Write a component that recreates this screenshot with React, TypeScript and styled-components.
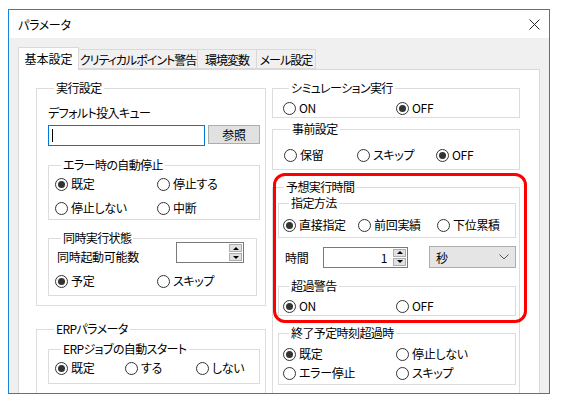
import React from "react";
import styled, { createGlobalStyle } from "styled-components";

const GlobalStyle = createGlobalStyle`
  html, body {
    margin: 0;
    padding: 0;
    background: #ffffff;
  }
  body {
    font-family: "Noto Sans CJK JP", "Noto Sans", sans-serif;
    font-size: 12px;
    font-feature-settings: "palt";
    letter-spacing: -0.3px;
    color: #000;
  }
`;

const Window = styled.div`
  margin: 9px 0 0 8px;
  width: 542px;
  height: 385px;
  box-sizing: border-box;
  border: 1px solid #1883d7;
  display: flex;
  flex-direction: column;
  overflow: hidden;
`;

const TitleBar = styled.div`
  height: 28px;
  flex: none;
  background: #fff;
  display: flex;
  align-items: center;
  justify-content: space-between;
  padding: 0 9px 0 9px;
  font-size: 12px;
`;

const CloseIcon = () => (
  <svg width="11" height="11" viewBox="0 0 11 11">
    <path d="M0.5 0.5 L10.5 10.5 M10.5 0.5 L0.5 10.5" stroke="#222" strokeWidth="1" />
  </svg>
);

const Body = styled.div`
  flex: 1;
  background: #f0f0f0;
  padding: 9px 9px 0 9px;
  display: flex;
  flex-direction: column;
  min-height: 0;
`;

const TabStrip = styled.div`
  display: flex;
  align-items: flex-end;
  height: 22px;
  flex: none;
  position: relative;
  z-index: 1;
`;

const Tab = styled.div<{ $active?: boolean; $w: number }>`
  box-sizing: border-box;
  width: ${(p) => p.$w}px;
  height: ${(p) => (p.$active ? "23px" : "20px")};
  margin-bottom: ${(p) => (p.$active ? "-1px" : "0")};
  padding-bottom: ${(p) => (p.$active ? "1px" : "0")};
  background: ${(p) => (p.$active ? "#fff" : "#f0f0f0")};
  border: 1px solid #d9d9d9;
  border-bottom: ${(p) => (p.$active ? "none" : "1px solid #d9d9d9")};
  border-left: ${(p) => (p.$active ? "1px solid #d9d9d9" : "none")};
  display: flex;
  align-items: center;
  justify-content: center;
  white-space: nowrap;
  letter-spacing: ${(p) => (p.$active ? "0" : "-1px")};
`;

const Panel = styled.div`
  position: relative;
  flex: 1;
  background: #fff;
  border: 1px solid #d9d9d9;
  border-bottom: none;
  padding: 12px 0 0 17px;
  display: grid;
  grid-template-columns: 230px 248px;
  column-gap: 6px;
  align-items: start;
`;

const Column = styled.div`
  display: flex;
  flex-direction: column;
`;

const Group = styled.fieldset<{ $pad: string; $mt?: number; $mr?: number }>`
  margin: ${(p) => `${p.$mt ?? 0}px ${p.$mr ?? 0}px 0 0`};
  padding: ${(p) => p.$pad};
  border: 1px solid #dcdcdc;
  min-width: 0;
  box-sizing: border-box;
`;

const Legend = styled.legend`
  padding: 0 2px;
  margin-left: 6px;
  line-height: 12px;
  font-size: 12px;
  letter-spacing: -0.6px;
`;

const Caption = styled.div`
  line-height: 16px;
  letter-spacing: -0.6px;
`;

const RadioGrid = styled.div<{ $cols: string; $gap?: number; $mt?: number }>`
  display: grid;
  grid-template-columns: ${(p) => p.$cols};
  row-gap: ${(p) => p.$gap ?? 0}px;
  margin-top: ${(p) => p.$mt ?? 0}px;
`;

const RadioItem = styled.label`
  display: flex;
  align-items: center;
  height: 16px;
  line-height: 16px;
  white-space: nowrap;
`;

const RadioCircle = styled.span<{ $checked?: boolean }>`
  width: 13px;
  height: 13px;
  box-sizing: border-box;
  border: 1px solid #333;
  border-radius: 50%;
  background: #fff;
  margin-right: 3px;
  display: flex;
  align-items: center;
  justify-content: center;
  flex: none;
  &::after {
    content: "";
    display: ${(p) => (p.$checked ? "block" : "none")};
    width: 7px;
    height: 7px;
    border-radius: 50%;
    background: #333;
  }
`;

const Radio = ({ label, checked }: { label: string; checked?: boolean }) => (
  <RadioItem>
    <RadioCircle $checked={checked} />
    {label}
  </RadioItem>
);

const InputRow = styled.div`
  display: flex;
  align-items: flex-start;
  gap: 3px;
  margin-top: 4px;
`;

const TextBox = styled.div`
  width: 157px;
  height: 21px;
  box-sizing: border-box;
  border: 1px solid #0078d7;
  background: #fff;
  display: flex;
  align-items: center;
  padding-left: 3px;
`;

const Caret = styled.span`
  width: 1px;
  height: 13px;
  background: #000;
`;

const Button = styled.div`
  width: 52px;
  height: 19px;
  box-sizing: border-box;
  border: 1px solid #adadad;
  background: #e1e1e1;
  display: flex;
  align-items: center;
  justify-content: center;
`;

const SpinRow = styled.div`
  display: flex;
  align-items: flex-end;
  margin-top: -2px;
  padding-right: 12px;
`;

const SpinLabel = styled.span`
  line-height: 16px;
  padding-left: 2px;
  margin-bottom: -2px;
`;

const SpinBox = styled.div<{ $w: number; $mlAuto?: boolean }>`
  width: ${(p) => p.$w}px;
  height: 21px;
  box-sizing: border-box;
  border: 1px solid #7a7a7a;
  background: #fff;
  display: flex;
  margin-left: ${(p) => (p.$mlAuto ? "auto" : "0")};
`;

const SpinValue = styled.div`
  flex: 1;
  text-align: right;
  padding-right: 4px;
  line-height: 19px;
`;

const SpinButtons = styled.div`
  width: 16px;
  display: flex;
  flex-direction: column;
  gap: 1px;
  padding: 1px;
  box-sizing: border-box;
  border-left: 1px solid #fff;
`;

const SpinButton = styled.div<{ $down?: boolean }>`
  flex: 1;
  background: #e1e1e1;
  border: 1px solid #adadad;
  display: flex;
  align-items: center;
  justify-content: center;
  &::after {
    content: "";
    width: 0;
    height: 0;
    border-left: 3px solid transparent;
    border-right: 3px solid transparent;
    ${(p) => (p.$down ? "border-top: 3px solid #000;" : "border-bottom: 3px solid #000;")}
  }
`;

const Spinner = ({ w, value, mlAuto }: { w: number; value?: string; mlAuto?: boolean }) => (
  <SpinBox $w={w} $mlAuto={mlAuto}>
    <SpinValue>{value}</SpinValue>
    <SpinButtons>
      <SpinButton />
      <SpinButton $down />
    </SpinButtons>
  </SpinBox>
);

const TimeRow = styled.div`
  display: flex;
  align-items: center;
  margin-top: 8px;
  padding-left: 7px;
`;

const TimeLabel = styled.span`
  width: 38px;
`;

const Combo = styled.div`
  margin-left: auto;
  width: 87px;
  height: 22px;
  box-sizing: border-box;
  border: 1px solid #adadad;
  background: #e5e5e5;
  display: flex;
  align-items: center;
  justify-content: space-between;
  padding: 0 6px 0 6px;
`;

const Chevron = () => (
  <svg width="10" height="6" viewBox="0 0 10 6">
    <polyline points="0.5,0.5 5,5 9.5,0.5" fill="none" stroke="#555" strokeWidth="1" />
  </svg>
);

const Highlight = styled.div`
  position: absolute;
  left: 254px;
  top: 103px;
  width: 254px;
  height: 150px;
  box-sizing: border-box;
  border: 3px solid #ff0000;
  border-radius: 12px;
  pointer-events: none;
`;

export default function App() {
  return (
    <>
      <GlobalStyle />
      <Window>
        <TitleBar>
          <span>パラメータ</span>
          <CloseIcon />
        </TitleBar>
        <Body>
          <TabStrip>
            <Tab $active $w={61}>基本設定</Tab>
            <Tab $w={119}>クリティカルポイント警告</Tab>
            <Tab $w={59}>環境変数</Tab>
            <Tab $w={59}>メール設定</Tab>
          </TabStrip>
          <Panel>
            <Column>
              <Group $pad="11px 4px 9px 11px">
                <Legend>実行設定</Legend>
                <Caption>デフォルト投入キュー</Caption>
                <InputRow>
                  <TextBox>
                    <Caret />
                  </TextBox>
                  <Button>参照</Button>
                </InputRow>
                <Group $pad="5px 0 3px 6px" $mt={13} $mr={1}>
                  <Legend>エラー時の自動停止</Legend>
                  <RadioGrid $cols="102px 1fr" $gap={8}>
                    <Radio label="既定" checked />
                    <Radio label="停止する" />
                    <Radio label="停止しない" />
                    <Radio label="中断" />
                  </RadioGrid>
                </Group>
                <Group $pad="0 0 6px 6px" $mt={12} $mr={4}>
                  <Legend>同時実行状態</Legend>
                  <SpinRow>
                    <SpinLabel>同時起動可能数</SpinLabel>
                    <Spinner w={68} mlAuto />
                  </SpinRow>
                  <RadioGrid $cols="102px 1fr" $mt={10}>
                    <Radio label="予定" checked />
                    <Radio label="スキップ" />
                  </RadioGrid>
                </Group>
              </Group>
              <Group $pad="8px 4px 20px 11px" $mt={17}>
                <Legend>ERPパラメータ</Legend>
                <Group $pad="5px 0 7px 6px" $mr={1}>
                  <Legend>ERPジョブの自動スタート</Legend>
                  <RadioGrid $cols="70px 71px 1fr">
                    <Radio label="既定" checked />
                    <Radio label="する" />
                    <Radio label="しない" />
                  </RadioGrid>
                </Group>
              </Group>
            </Column>
            <Column>
              <Group $pad="6px 0 1px 10px">
                <Legend>シミュレーション実行</Legend>
                <RadioGrid $cols="113px 1fr">
                  <Radio label="ON" />
                  <Radio label="OFF" checked />
                </RadioGrid>
              </Group>
              <Group $pad="12px 0 6px 11px" $mt={5}>
                <Legend>事前設定</Legend>
                <RadioGrid $cols="73px 79px 1fr">
                  <Radio label="保留" />
                  <Radio label="スキップ" />
                  <Radio label="OFF" checked />
                </RadioGrid>
              </Group>
              <Group $pad="4px 3px 20px 5px" $mt={11}>
                <Legend>予想実行時間</Legend>
                <Group $pad="8px 0 4px 4px">
                  <Legend>指定方法</Legend>
                  <RadioGrid $cols="75px 79px 1fr">
                    <Radio label="直接指定" checked />
                    <Radio label="前回実績" />
                    <Radio label="下位累積" />
                  </RadioGrid>
                </Group>
                <TimeRow>
                  <TimeLabel>時間</TimeLabel>
                  <Spinner w={85} value="1" />
                  <Combo>
                    <span>秒</span>
                    <Chevron />
                  </Combo>
                </TimeRow>
                <Group $pad="6px 0 1px 4px" $mt={12}>
                  <Legend>超過警告</Legend>
                  <RadioGrid $cols="113px 1fr">
                    <Radio label="ON" checked />
                    <Radio label="OFF" />
                  </RadioGrid>
                </Group>
                <Group $pad="7px 0 3px 4px" $mt={11}>
                  <Legend>終了予定時刻超過時</Legend>
                  <RadioGrid $cols="113px 1fr" $gap={3}>
                    <Radio label="既定" checked />
                    <Radio label="停止しない" />
                    <Radio label="エラー停止" />
                    <Radio label="スキップ" />
                  </RadioGrid>
                </Group>
              </Group>
            </Column>
            <Highlight />
          </Panel>
        </Body>
      </Window>
    </>
  );
}
